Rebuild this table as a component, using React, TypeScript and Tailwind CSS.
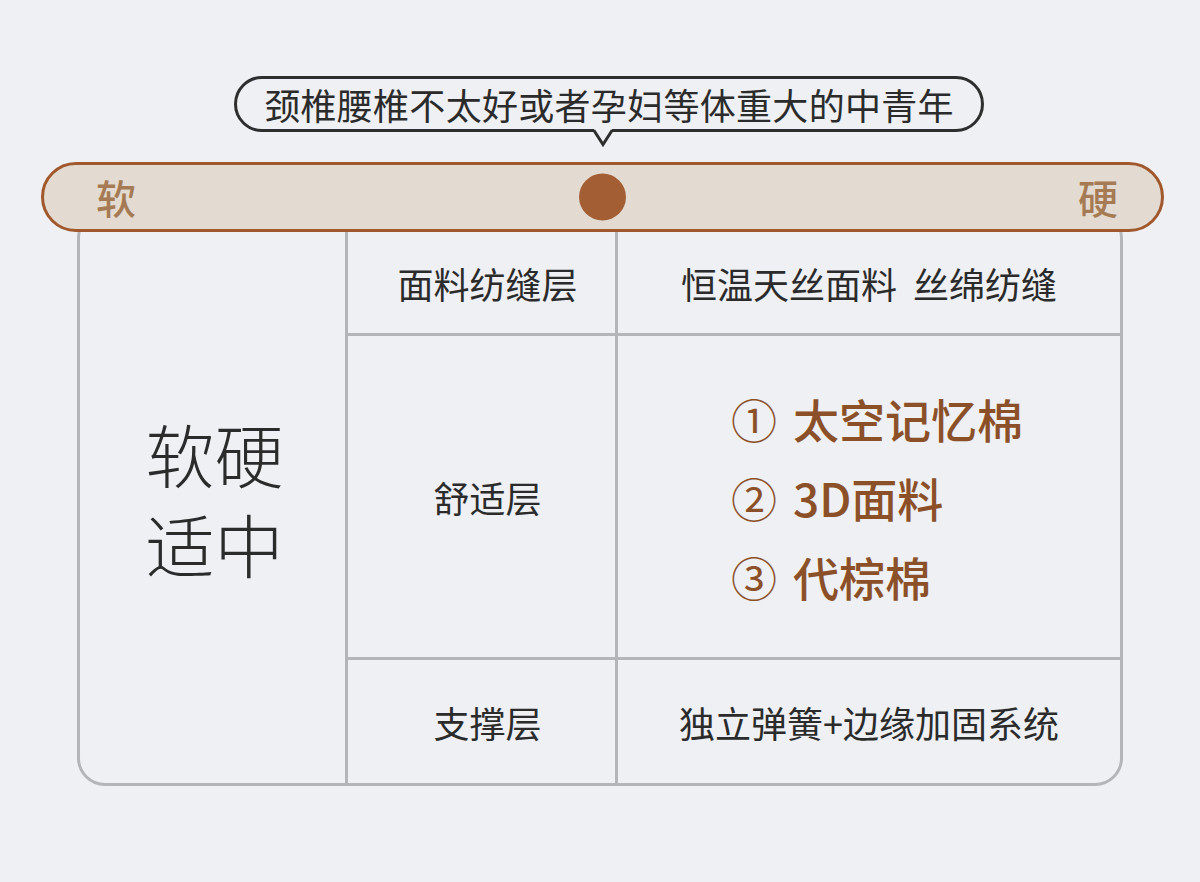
import React from "react";

const FONT = { fontFamily: '"Noto Sans CJK SC", "Noto Sans", sans-serif' };

export default function App() {
  return (
    <div
      className="w-[1200px] h-[882px] bg-[#eef0f4] overflow-hidden pt-[76px] text-[#2b2b2b]"
      style={FONT}
    >
      {/* Speech bubble */}
      <div className="relative ml-[234px] w-[750px] h-[56px] rounded-full border-[3px] border-[#2e2e2e] flex items-center justify-center">
        <span className="text-[36px] leading-none tracking-[0.3px]">颈椎腰椎不太好或者孕妇等体重大的中青年</span>
        <svg
          className="absolute left-[354px] top-[50px]"
          width="24"
          height="18"
          viewBox="0 0 24 18"
        >
          <path d="M3 0 L21 0 L12 14.5 Z" fill="#eef0f4" />
          <path d="M3 1.5 L12 15.5 L21 1.5" fill="none" stroke="#2e2e2e" strokeWidth="3" strokeLinejoin="miter" />
        </svg>
      </div>

      {/* Soft / hard bar */}
      <div className="relative z-10 mt-[30px] ml-[41px] w-[1123px] h-[70px] rounded-full border-[3px] border-[#a0582c] bg-[#e3dbd1] flex items-center justify-between pl-[52px] pr-[43px]">
        <span className="text-[40px] leading-none font-medium text-[#a67b54]">软</span>
        <span className="text-[40px] leading-none font-medium text-[#a67b54]">硬</span>
        <div className="absolute left-[535px] top-1/2 -translate-y-1/2 w-[47px] h-[47px] rounded-full bg-[#a45e34]" />
      </div>

      {/* Table */}
      <div className="mt-[-22px] ml-[77px] w-[1046px] h-[576px] rounded-[28px] border-[3px] border-[#b4b5b9] flex">
        <div className="w-[268px] border-r-[3px] border-[#b4b5b9] flex items-center justify-center pl-[4px]">
          <div className="flex flex-col gap-[21px] text-[69px] leading-none font-light text-center">
            <div>软硬</div>
            <div>适中</div>
          </div>
        </div>
        <div className="flex-1 flex flex-col">
          {/* row 1 */}
          <div className="h-[123px] border-b-[3px] border-[#b4b5b9] flex">
            <div className="w-[270px] border-r-[3px] border-[#b4b5b9] flex items-center justify-center pt-[20px] pl-[12px] text-[36px] leading-none">
              面料纺缝层
            </div>
            <div className="flex-1 flex items-center justify-center pt-[20px] text-[36px] leading-none whitespace-pre">
              恒温天丝面料  丝绵纺缝
            </div>
          </div>
          {/* row 2 */}
          <div className="h-[324px] border-b-[3px] border-[#b4b5b9] flex">
            <div className="w-[270px] border-r-[3px] border-[#b4b5b9] flex items-center justify-center pl-[12px] text-[36px] leading-none">
              舒适层
            </div>
            <div className="flex-1 flex flex-col justify-center pl-[113px] text-[#8c5029]">
              {[
                ["①", "太空记忆棉"],
                ["②", "3D面料"],
                ["③", "代棕棉"],
              ].map(([n, t]) => (
                <div key={n} className="h-[79px] flex items-center text-[46px] leading-none">
                  <span className="font-normal">{n}</span>
                  <span className="ml-[16px] font-medium">{t}</span>
                </div>
              ))}
            </div>
          </div>
          {/* row 3 */}
          <div className="flex-1 flex">
            <div className="w-[270px] border-r-[3px] border-[#b4b5b9] flex items-center justify-center pl-[12px] text-[36px] leading-none">
              支撑层
            </div>
            <div className="flex-1 flex items-center justify-center text-[36px] leading-none">
              独立弹簧+边缘加固系统
            </div>
          </div>
        </div>
      </div>
    </div>
  );
}
